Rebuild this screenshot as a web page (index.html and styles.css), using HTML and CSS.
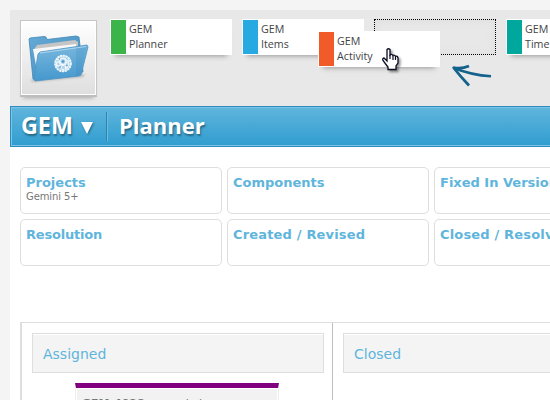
FILE: index.html
```html
<!DOCTYPE html>
<html lang="en">
<head>
<meta charset="utf-8">
<title>GEM Planner</title>
<link rel="stylesheet" href="styles.css">
</head>
<body>
<div class="app">
  <header class="top">
    <div class="project-icon">
      <svg width="75" height="75" viewBox="0 0 75 75">
        <defs>
          <linearGradient id="front" x1="0" y1="0" x2="0" y2="1"><stop offset="0" stop-color="#79b7de"/><stop offset="1" stop-color="#4598cd"/></linearGradient>
          <linearGradient id="back" x1="0" y1="0" x2="1" y2="1"><stop offset="0" stop-color="#66a9d5"/><stop offset="1" stop-color="#3f8dc0"/></linearGradient>
          <filter id="soft"><feGaussianBlur stdDeviation="1.2"/></filter>
        </defs>
        <path d="M9 59 64 53 62 56 12 61Z" fill="#999" opacity=".6" filter="url(#soft)"/>
        <path d="M8 18 9 17 23 15.500 25 16 26 18.500 55 15 58 16 62 51 14 59 12 58Z" fill="url(#back)" stroke="#3f86b8" stroke-width=".8"/>
        <path d="M14 27 16 24 54 19 57 21 57 40 17 50Z" fill="#c5c5c5"/>
        <path d="M12 28 55 23 55 40 16 50Z" fill="#f8f8f8"/>
        <path d="M19 31 66 24 67 26 60 54 58 55 14 60 13 58 17 33Z" fill="url(#front)" stroke="#4a93c4" stroke-width=".8"/>
        <path d="M55 26 66 24.500 59 54 55 54.500Z" fill="#2f80b8" opacity=".2"/>
        <path d="M19 32 65 25.500" stroke="#b5daf0" stroke-width=".9"/>
        <circle cx="42" cy="42.500" r="8.500" fill="#a9d0e8"/>
        <g fill="none" stroke="#f0f7fb">
          <circle cx="42" cy="42.500" r="7.800" stroke-width="2" stroke-dasharray="2 .8"/>
          <circle cx="42" cy="40.500" r="3.200" stroke-width="1.500"/>
          <circle cx="37.500" cy="43" r="2" stroke-width="1.300"/>
          <circle cx="42.500" cy="46.500" r="2.200" stroke-width="1.500" stroke-dasharray="2 .6"/>
          <path d="M47 39 47.500 44 45 48M36 38 38 39" stroke-width="1.500"/>
        </g>
        <g fill="#4b98c9"><circle cx="42" cy="40.500" r="1.300"/><circle cx="39" cy="46" r=".8"/><circle cx="46" cy="44.500" r=".8"/><circle cx="38.500" cy="38" r=".7"/></g>
      </svg>
    </div>
    <nav class="tabs">
      <div class="tab green"><span>GEM<br>Planner</span></div>
      <div class="tab blue"><span>GEM<br>Items</span></div>
      <div class="drop"></div>
      <div class="tab teal"><span>GEM<br>Time</span></div>
    </nav>
  </header>
  <div class="titlebar">
    <span class="name">GEM</span>
    <svg class="caret" width="12" height="12" viewBox="0 0 12 12"><path d="M0 0H12L6 12Z" fill="#fff"/></svg>
    <h1>Planner</h1>
  </div>
  <main>
    <section class="filters">
      <div class="card"><h2>Projects</h2><p>Gemini 5+</p></div>
      <div class="card"><h2>Components</h2></div>
      <div class="card"><h2>Fixed In Version</h2></div>
      <div class="card"><h2 class="tight">Resolution</h2></div>
      <div class="card"><h2 class="wide">Created / Revised</h2></div>
      <div class="card"><h2 class="wide">Closed / Resolved</h2></div>
    </section>
    <section class="board">
      <div class="column">
        <h3>Assigned</h3>
        <div class="task"><b>GEM-4028</b> <span>example issue</span></div>
      </div>
      <div class="column"><h3>Closed</h3></div>
    </section>
  </main>
</div>
<div class="tab orange dragged"><span>GEM<br>Activity</span></div>
<svg class="cursor" width="20" height="24" viewBox="0 0 20 24"><path d="M5 1.500Q6.500 0 8 1.500V7Q9.500 5.500 11 7.500 12.500 6.500 13.500 8.500 15.500 7.500 16 10V15L14 18V21.500H6V19L1 12.500Q0 10.500 2 10L5 13Z" fill="#fff" stroke="#0c0c20" stroke-width="1.300"/><path d="M8 7V11M11 8V12M13.500 9V12" stroke="#0c0c20" stroke-width="1.200"/></svg>
<svg class="arrow" width="42" height="24" viewBox="0 0 42 24"><path d="M40 12.300Q20 11 3 4" fill="none" stroke="#12628c" stroke-width="2.500"/><path d="M2 3.500Q10 5.500 18 2M2 3Q9 12 18 21.500" fill="none" stroke="#12628c" stroke-width="2.800"/></svg>
</body>
</html>
```
FILE: styles.css
```css
* { box-sizing: border-box; }
body {
  margin: 0;
  padding: 10px 0 0 10px;
  width: 550px;
  height: 400px;
  overflow: hidden;
  background: #f4f4f4;
  font-family: "DejaVu Sans", sans-serif;
}
h1, h2, h3, p { margin: 0; }
.app { width: 540px; height: 390px; overflow: hidden; background: #fff; }
.top {
  display: flex;
  height: 96px;
  padding: 9px 0 0 10px;
  background: #e8e8e8;
}
.project-icon {
  flex: none;
  width: 77px;
  height: 77px;
  margin: 1px 13px 0 0;
  border: 1px solid #c6c6c6;
  border-bottom: 2px solid #bdbdbd;
  background: linear-gradient(#fff, #dedede);
  box-shadow: inset 0 0 0 1px #fff, 0 4px 4px -3px #aaa;
}
.project-icon svg { display: block; }
.tabs { display: flex; gap: 10px; }
.tab {
  position: relative;
  flex: none;
  width: 122px;
  height: 36px;
  padding: 2px 0 0 3px;
  border: 1px solid #fff;
  background: #fff;
  font: 10.7px/15px "Open Sans", sans-serif;
  color: #444;
  box-shadow: 0 6px 5px -5px #999;
}
.tab::before {
  content: "";
  position: absolute;
  left: 0;
  top: 0;
  width: 15px;
  height: 34px;
  background: var(--tag);
}
.tab span { display: block; padding-left: 15px; }
.green { --tag: #3bb54a; }
.blue { --tag: #27aae1; }
.teal { --tag: #00a79d; }
.orange { --tag: #f15a29; }
.drop {
  flex: none;
  width: 122px;
  height: 36px;
  border: 1px dotted #000;
  box-shadow: inset 0 0 8px #ddd;
}
.dragged { position: absolute; left: 318px; top: 31px; }
.cursor { position: absolute; left: 382px; top: 48px; filter: drop-shadow(2px 2px 1px rgba(0,0,0,.4)); }
.arrow { position: absolute; left: 451px; top: 64px; }
.titlebar {
  display: flex;
  align-items: center;
  height: 41px;
  padding-left: 11px;
  border: 1px solid #2c8cbd;
  border-right: 0;
  background: linear-gradient(#60b5dc, #309dd0);
  box-shadow: inset 1px 1px #7cc4e6, inset 0 -1px #7cc4e6;
  color: #fff;
  font: bold 22px/38px "Open Sans", sans-serif;
  text-shadow: 1px 2px 2px #276785;
}
.titlebar .name, .titlebar h1 { font: inherit; }
.titlebar .name { width: 60px; margin: -3px 0 0 -1px; font-size: 23.3px; }
.caret { margin-top: 2px; filter: drop-shadow(1px 1px 1px #276785); }
.titlebar h1 {
  height: 29px;
  margin-left: 13px;
  padding-left: 12px;
  line-height: 27px;
  border-left: 1px solid #2a84b0;
  box-shadow: inset 1px 0 #6dbce0;
}
main { padding: 20px 0 0 10px; }
.filters { display: grid; grid-template-columns: repeat(3, 202px); grid-auto-rows: 47px; gap: 5px; }
.card { padding: 7px 5px 0; border: 1px solid #dedede; border-radius: 5px; white-space: nowrap; }
.card h2 { color: #60b5dc; font: bold 13px/16px "DejaVu Sans", sans-serif; }
.card .tight { letter-spacing: -.2px; }
.card .wide { letter-spacing: .17px; }
.card p { color: #777; font-size: 10px; line-height: 12px; letter-spacing: -.1px; }
.board {
  display: grid;
  grid-template-columns: 311px 311px;
  width: 640px;
  height: 90px;
  margin-top: 56px;
  border: 1px solid #dedede;
  border-left-width: 2px;
}
.column { padding: 10px 8px 0 10px; border-right: 1px solid #bdbdbd; }
.column h3 {
  height: 40px;
  padding-left: 10px;
  border: 1px solid #dedede;
  background: #f4f4f4;
  box-shadow: inset 0 1px #fff;
  color: #60b5dc;
  font: 14px/40px "DejaVu Sans", sans-serif;
}
.task {
  width: 204px;
  height: 60px;
  margin: 10px 0 0 43px;
  padding: 8px 6px;
  border: 1px solid #eee;
  border-top: 5px solid #800080;
  background: #f2f2f2;
  box-shadow: inset 0 0 0 1px #fff;
  color: #777;
  font-size: 11px;
  line-height: 15px;
}
```
